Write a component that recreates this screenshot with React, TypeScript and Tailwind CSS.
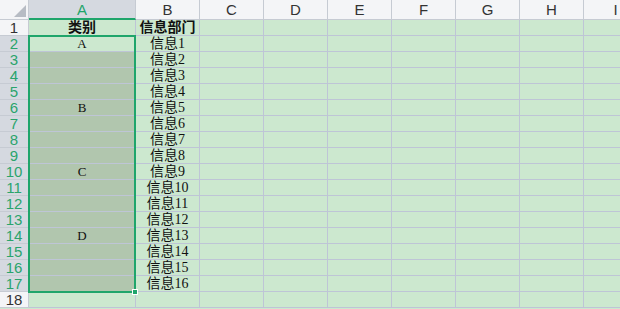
import React from "react";

const cols = ["C", "D", "E", "F", "G", "H", "I"];
const cats: Record<number, string> = { 2: "A", 6: "B", 10: "C", 14: "D" };

const cellFont = { fontFamily: '"Liberation Serif", "Noto Sans CJK SC", serif' };

export default function App() {
  const rows = Array.from({ length: 18 }, (_, i) => i + 1);

  return (
    <div className="relative h-[309px] w-[620px] overflow-hidden bg-[#cce8cf] font-['Liberation_Sans',sans-serif]">
      <div className="grid grid-cols-[29px_107px_64px_64px_64px_64px_64px_64px_64px_64px] grid-rows-[20px_repeat(18,16px)]">
        {/* header row */}
        <div className="relative border-r border-b border-[#c6cbd3] bg-[#f4f5f7]">
          <svg className="absolute right-[2px] bottom-[2px]" width="12" height="12" viewBox="0 0 12 12">
            <polygon points="12,0 12,12 0,12" fill="#b7bcc4" />
          </svg>
        </div>
        <div className="flex items-center justify-center border-r border-b-2 border-r-[#c6cbd3] border-b-[#1fa56b] bg-[#d5d9e0] text-[15px] leading-none text-[#1fa56b]">
          A
        </div>
        <div className="flex items-center justify-center border-r border-b border-[#c6cbd3] bg-[#f4f5f7] text-[15px] leading-none text-[#333]">
          B
        </div>
        {cols.map((c) => (
          <div
            key={c}
            className="flex items-center justify-center border-r border-b border-[#c6cbd3] bg-[#f4f5f7] text-[15px] leading-none text-[#333]"
          >
            {c}
          </div>
        ))}

        {rows.map((r) => {
          const sel = r >= 2 && r <= 17;
          const dark = r >= 3 && r <= 17;
          return (
            <React.Fragment key={r}>
              <div
                className={
                  "flex items-center justify-center border-r border-b border-[#c6cbd3] text-[15px] leading-none " +
                  (sel ? "bg-[#d5d9e0] text-[#2aa46c]" : "bg-[#f4f5f7] text-[#333]")
                }
              >
                {r}
              </div>
              <div
                style={cellFont}
                className={
                  "flex items-center justify-center border-r border-b border-[#bec5d6] text-[13px] leading-none text-[#111] " +
                  (dark ? "bg-[#b1c6ae]" : "bg-[#cce8cf]")
                }
              >
                {r === 1 ? (
                  <span className="text-[14px] leading-none font-bold">类别</span>
                ) : (
                  cats[r] ?? ""
                )}
              </div>
              <div
                style={cellFont}
                className="flex items-center justify-center border-r border-b border-[#bec5d6] text-[13px] leading-none text-[#111]"
              >
                {r === 1 ? (
                  <span className="text-[14px] leading-none font-bold">信息部门</span>
                ) : r <= 17 ? (
                  <span className="text-[14px] leading-none">{"信息" + (r - 1)}</span>
                ) : (
                  ""
                )}
              </div>
              {cols.map((c) => (
                <div key={c} className="border-r border-b border-[#bec5d6]" />
              ))}
            </React.Fragment>
          );
        })}
      </div>

      {/* selection box */}
      <div className="pointer-events-none absolute top-[35px] left-[28px] h-[258px] w-[108px] border-2 border-[#1fa56b]" />
      <div className="absolute top-[289px] left-[132px] h-[6px] w-[6px] border border-white bg-[#1fa56b]" />
    </div>
  );
}
